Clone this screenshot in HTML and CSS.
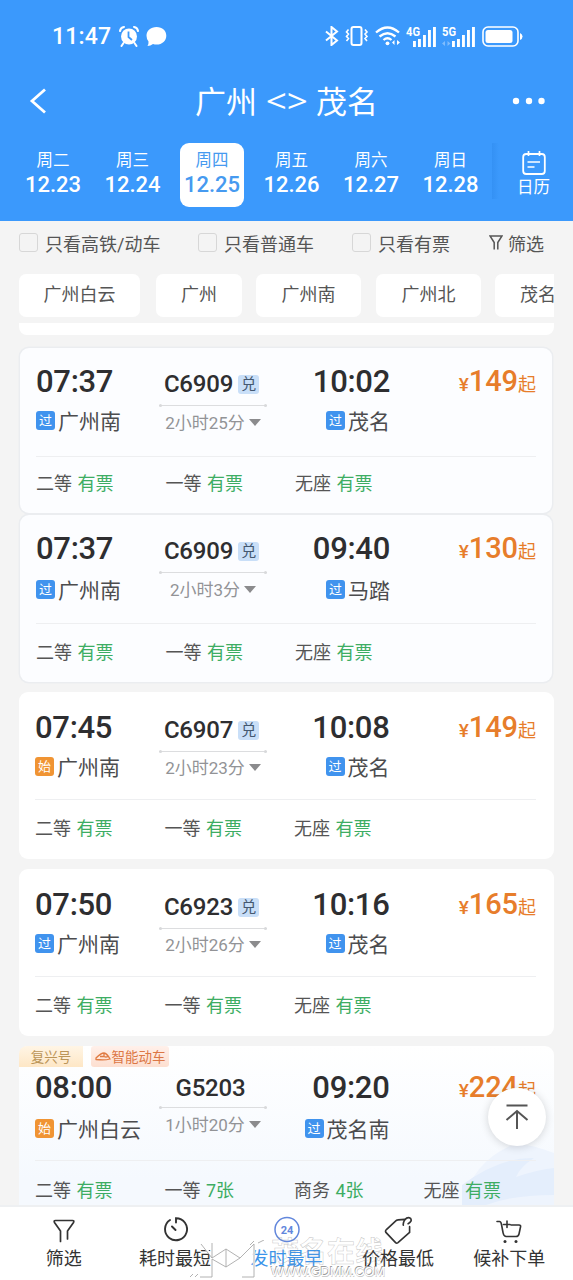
FILE: index.html
```html
<!DOCTYPE html>
<html lang="zh-CN">
<head>
<meta charset="utf-8">
<title>广州 - 茂名</title>
<link rel="stylesheet" href="styles.css">
</head>
<body>
<header class="header">
  <div class="status">
    <span class="status-time">11:47</span>
    <svg class="alarm" width="20" height="21" viewBox="0 0 20 21"><circle cx="10" cy="10.500" r="8" fill="#fff"/><path d="M1 5Q1.500 1.500 5 1M19 5Q18.500 1.500 15 1M4.500 17L2.500 20M15.500 17L17.500 20" stroke="#fff" stroke-width="2" fill="none" stroke-linecap="round"/><path d="M9.500 5.500V11L13 14" stroke="#3b99fc" stroke-width="1.800" fill="none"/></svg>
    <svg class="bubble" width="21" height="21" viewBox="0 0 21 21"><path d="M10.500 1C16.500 1 20.300 4.700 20.300 9.700S16.300 18.500 10.500 18.500Q8.800 18.500 7 18Q4.500 20 1.500 20Q2.800 18 2.500 15.500Q.5 13 .5 9.700C.5 4.700 4.700 1 10.500 1Z" fill="#fff"/></svg>
    <svg class="bt" width="14" height="20" viewBox="0 0 14 20"><path d="M1 5.500L12 14.500L6.500 19V1L12 5.500L1 14.500" fill="none" stroke="#fff" stroke-width="2"/></svg>
    <svg class="vibrate" width="24" height="20" viewBox="0 0 24 20"><rect x="6.500" y="1" width="10" height="18" rx="2" fill="none" stroke="#fff" stroke-width="2"/><path d="M3.500 3.500L1.500 6L3.500 8L1.500 10.500L3.500 12.500L1.500 15M20 3.500L22 6L20 8L22 10.500L20 12.500L22 15" fill="none" stroke="#fff" stroke-width="1.600"/></svg>
    <svg class="wifi" width="26" height="20" viewBox="0 0 26 20"><path d="M1 6.500Q12.500-3.500 24 6.500M4.500 10.500Q12.500 4 20.500 10.500M8.500 14Q12.500 10.500 16.500 14" fill="none" stroke="#fff" stroke-width="2.300"/><circle cx="12.500" cy="17.300" r="1.900" fill="#fff"/><path d="M17 16.500L19.500 14V19ZM25 16.500L22 14V19Z" fill="#fff"/></svg>
    <svg class="signal" width="31" height="21" viewBox="0 0 31 21"><text x="0" y="10" class="net" textLength="14" lengthAdjust="spacingAndGlyphs">4G</text><path d="M7 15h2.900v6H7zM12 13h2.900v8H12zM17 9h2.900v12H17zM22 4h2.900v17H22zM27 1h2.900v20H27z" fill="#fff"/></svg>
    <svg class="signal five" width="34" height="21" viewBox="0 0 34 21"><text x="0" y="10" class="net" textLength="14" lengthAdjust="spacingAndGlyphs">5G</text><path d="M10 15h2.900v6H10zM15 13h2.900v8H15zM20 9h2.900v12H20zM25 4h2.900v17H25zM30 1h2.900v20H30z" fill="#fff"/><path d="M0 17.500L3 15V20ZM8.500 17.500L5.500 15V20Z" fill="#7fbcfd"/></svg>
    <svg class="battery" width="41" height="21" viewBox="0 0 41 21"><rect x="1" y="1" width="35" height="19" rx="5" fill="none" stroke="#fff" stroke-width="1.600"/><rect x="3.500" y="4" width="27" height="13" rx="2.500" fill="#fff"/><path d="M38 7q2.500 1 2.500 3.500T38 14z" fill="#fff"/></svg>
  </div>
  <div class="titlebar">
    <svg class="back" width="18" height="26" viewBox="0 0 18 26"><path d="M17 1.500L4 13L17 24.500" fill="none" stroke="#fff" stroke-width="2.800"/></svg>
    <h1 class="title">广州 <span class="swap">&lt;&gt;</span> 茂名</h1>
    <svg class="more" width="34" height="8" viewBox="0 0 34 8"><circle cx="5" cy="4" r="3.200" fill="#fff"/><circle cx="18" cy="4" r="3.200" fill="#fff"/><circle cx="30.500" cy="4" r="3.200" fill="#fff"/></svg>
  </div>
  <nav class="dates">
    <div class="day"><span class="week">周二</span><span class="date">12.23</span></div>
    <div class="day"><span class="week">周三</span><span class="date">12.24</span></div>
    <div class="day active"><span class="week">周四</span><span class="date">12.25</span></div>
    <div class="day"><span class="week">周五</span><span class="date">12.26</span></div>
    <div class="day"><span class="week">周六</span><span class="date">12.27</span></div>
    <div class="day"><span class="week">周日</span><span class="date">12.28</span></div>
    <div class="calendar">
      <svg width="24" height="24" viewBox="0 0 24 24"><rect x="1.200" y="3" width="21.600" height="20" rx="3" fill="none" stroke="#fff" stroke-width="1.800"/><path d="M6.500 0V5M17.500 0V5M5.500 11H18M5.500 16H12.500" stroke="#fff" stroke-width="1.700"/></svg>
      <span>日历</span>
    </div>
  </nav>
</header>

<div class="filters">
  <label class="check"><i class="box"></i>只看高铁/动车</label>
  <label class="check second"><i class="box"></i>只看普通车</label>
  <label class="check third"><i class="box"></i>只看有票</label>
  <span class="more-filter"><svg width="14" height="15" viewBox="0 0 14 15"><path d="M5.200 14.500V7.500L1 1H13L8.800 7.500V14.500" fill="none" stroke="#555" stroke-width="1.500"/></svg>筛选</span>
</div>
<div class="chips">
  <span class="chip baiyun">广州白云</span>
  <span class="chip gz">广州</span>
  <span class="chip south">广州南</span>
  <span class="chip north">广州北</span>
  <span class="chip mm">茂名</span>
</div>

<main class="list">
  <div class="card-end"></div>

  <article class="card framed">
    <div class="trip">
      <div class="from"><div class="time">07:37</div><div class="station"><i class="mark">过</i>广州南</div></div>
      <div class="train"><div class="number">C6909<i class="points">兑</i></div><div class="line"></div><div class="duration">2小时25分<i class="caret"></i></div></div>
      <div class="to"><div class="time">10:02</div><div class="station"><i class="mark">过</i>茂名</div></div>
      <div class="price"><small>¥</small><b>149</b><em>起</em></div>
    </div>
    <div class="seats"><span>二等 <b>有票</b></span><span>一等 <b>有票</b></span><span>无座 <b>有票</b></span></div>
  </article>

  <article class="card framed next">
    <div class="trip">
      <div class="from"><div class="time">07:37</div><div class="station"><i class="mark">过</i>广州南</div></div>
      <div class="train"><div class="number">C6909<i class="points">兑</i></div><div class="line"></div><div class="duration">2小时3分<i class="caret"></i></div></div>
      <div class="to"><div class="time">09:40</div><div class="station"><i class="mark">过</i>马踏</div></div>
      <div class="price"><small>¥</small><b>130</b><em>起</em></div>
    </div>
    <div class="seats"><span>二等 <b>有票</b></span><span>一等 <b>有票</b></span><span>无座 <b>有票</b></span></div>
  </article>

  <article class="card">
    <div class="trip">
      <div class="from"><div class="time">07:45</div><div class="station"><i class="mark start">始</i>广州南</div></div>
      <div class="train"><div class="number">C6907<i class="points">兑</i></div><div class="line"></div><div class="duration">2小时23分<i class="caret"></i></div></div>
      <div class="to"><div class="time">10:08</div><div class="station"><i class="mark">过</i>茂名</div></div>
      <div class="price"><small>¥</small><b>149</b><em>起</em></div>
    </div>
    <div class="seats"><span>二等 <b>有票</b></span><span>一等 <b>有票</b></span><span>无座 <b>有票</b></span></div>
  </article>

  <article class="card">
    <div class="trip">
      <div class="from"><div class="time">07:50</div><div class="station"><i class="mark">过</i>广州南</div></div>
      <div class="train"><div class="number">C6923<i class="points">兑</i></div><div class="line"></div><div class="duration">2小时26分<i class="caret"></i></div></div>
      <div class="to"><div class="time">10:16</div><div class="station"><i class="mark">过</i>茂名</div></div>
      <div class="price"><small>¥</small><b>165</b><em>起</em></div>
    </div>
    <div class="seats"><span>二等 <b>有票</b></span><span>一等 <b>有票</b></span><span>无座 <b>有票</b></span></div>
  </article>

  <article class="card tagged">
    <svg class="train-art" width="92" height="62" viewBox="0 0 92 62"><path d="M0 62Q10 20 48 3Q60-2 92 10V62Z" fill="#eef4fd"/><path d="M0 42Q38 14 72 15Q58 24 54 34Q74 27 92 25V52Q50 52 24 62H0Z" fill="#e4eefc"/></svg>
    <div class="tags"><span class="tag fuxing">复兴号</span><span class="tag smart"><svg width="16" height="9" viewBox="0 0 16 9"><path d="M1 6Q6 1 9 1Q12 1.500 15 7Q10 8.500 1 7.500ZM5 4.500H9V1.500M9 4.500Q11 5.500 13 4.500" fill="none" stroke="#e07b43" stroke-width="1.300"/></svg>智能动车</span></div>
    <div class="trip">
      <div class="from"><div class="time">08:00</div><div class="station"><i class="mark start">始</i>广州白云</div></div>
      <div class="train"><div class="number plain">G5203</div><div class="line"></div><div class="duration">1小时20分<i class="caret"></i></div></div>
      <div class="to"><div class="time">09:20</div><div class="station"><i class="mark">过</i>茂名南</div></div>
      <div class="price"><small>¥</small><b>224</b><em>起</em></div>
    </div>
    <div class="seats"><span>二等 <b>有票</b></span><span>一等 <b>7张</b></span><span>商务 <b>4张</b></span><span>无座 <b>有票</b></span></div>
  </article>

  <button class="to-top"><svg width="24" height="26" viewBox="0 0 24 26"><path d="M1.500 1.500H22.500M12 25V7M1.500 16L12 7L22.500 16" fill="none" stroke="#555" stroke-width="2"/></svg></button>
</main>

<footer class="tabs">
  <div class="tab"><svg width="26" height="28" viewBox="0 0 26 28"><path d="M9.500 25V14.500L3.500 6Q2.500 4 4.500 4H21.500Q23.500 4 22.500 6L16.500 14.500V22.500" fill="none" stroke="#333" stroke-width="1.700" stroke-linecap="round"/></svg>筛选</div>
  <div class="tab"><svg width="26" height="28" viewBox="0 0 26 28"><path d="M8 3.500A11 11 0 1 0 14 1.700V6M10 10L13.500 13.500" fill="none" stroke="#333" stroke-width="1.900" stroke-linecap="round"/></svg>耗时最短</div>
  <div class="tab current"><svg width="26" height="28" viewBox="0 0 26 28"><circle cx="13" cy="13" r="12" fill="none" stroke="#6287dc" stroke-width="1.500"/><text x="13" y="17" text-anchor="middle" class="clock-text">24</text></svg>发时最早</div>
  <div class="tab"><svg width="30" height="30" viewBox="0 0 30 30"><path d="M15 4L22 3.500M27 11V17L15 27.500Q13.500 28.500 12.500 27.500L2.500 17Q1.500 15.500 3 14L13 4.800Q14 4 15 4M20.500 9.500Q20 7 22 4Q25 .5 28 2.500Q30 5.500 25.500 8" fill="none" stroke="#333" stroke-width="1.700" stroke-linecap="round"/></svg>价格最低</div>
  <div class="tab"><svg width="28" height="28" viewBox="0 0 28 28"><path d="M2 5H4.500Q6 5 6.500 8L8 16Q8.500 19.500 11 20H22M16 8.500H24Q26 8.500 25.500 10.500L24 17.500Q23.500 20 21 20M12 4.500V11M8.500 8H15" fill="none" stroke="#333" stroke-width="1.600" stroke-linecap="round"/><circle cx="10" cy="25" r="1.500" fill="#333"/><circle cx="21" cy="25" r="1.500" fill="#333"/></svg>候补下单</div>
  <div class="watermark">
    <svg width="80" height="40" viewBox="0 0 80 40"><g fill="none" stroke="#fff" stroke-width="2.500"><path d="M14 5L34 26L50 16M24 2V38H10M40 8V28M36 14L50 22L66 4M66 4V38H54"/></g><g fill="none" stroke="#a9a9a9" stroke-width=".9"><path d="M13 4L24 18V3M24 18L38 9V27L24 19V37H12M38 9L52 18L38 27M52 18L66 4V37H54M2 37L5 34M7 37L10 34M62 5L66 1M70 3L76 0"/></g></svg>
    <div class="mark-text"><span class="mark-name">茂名在线</span><span class="mark-url">WWW.GDMM.COM</span></div>
  </div>
</footer>
</body>
</html>
```
FILE: styles.css
```css
* { box-sizing: border-box; }
body {
  margin: 0;
  width: 573px;
  height: 1280px;
  overflow: hidden;
  display: flex;
  flex-direction: column;
  background: #f4f4f4;
  color: #4c4c4e;
  font-family: Roboto, "Noto Sans CJK SC", sans-serif;
  font-size: 18px;
}
i, em { font-style: normal; }
svg { display: block; flex: none; }

/* header */
.header { flex: none; height: 221px; background: #3b99fc; color: #fff; }
.status { height: 72px; padding-left: 52px; display: flex; align-items: center; }
.status-time { width: 59px; font-size: 23px; font-weight: 500; letter-spacing: .2px; }
.alarm { margin-left: 8px; }
.bubble { margin-left: 7px; }
.bt { margin-left: 158px; }
.vibrate { margin-left: 6px; }
.wifi { margin-left: 6px; }
.signal { margin-left: 5px; }
.five { margin-left: 5px; }
.net { font: bold 12px Roboto, sans-serif; fill: #fff; }
.battery { margin-left: 6px; }
.titlebar { height: 58px; padding: 0 28px; display: flex; align-items: center; justify-content: space-between; }
.title { margin: 0 0 0 16px; padding-top: 3px; font-size: 31px; font-weight: 400; line-height: 58px; white-space: pre; }
.swap { display: inline-block; font-family: "Open Sans", sans-serif; font-size: 33px; line-height: 30px; transform: scaleX(1.12); margin: 0 3px; }
.dates { height: 77px; padding: 13px 0 0 21px; display: flex; gap: 15.500px; }
.day { width: 64px; height: 64px; border-radius: 9px; display: flex; flex-direction: column; align-items: center; }
.week { margin-top: 6px; font-size: 16.500px; line-height: 24px; }
.date { font-size: 22px; line-height: 24px; font-weight: 500; }
.active { background: #fff; color: #469af0; }
.calendar { margin-left: -6px; padding: 8px 0 0 5px; width: 78px; height: 56px; display: flex; flex-direction: column; align-items: center; font-size: 16.500px; line-height: 26px; background: linear-gradient(90deg, #3491f4, #3b99fc 7px); }

/* filters */
.filters { flex: none; height: 46px; padding: 0 0 3px 19px; display: flex; align-items: center; color: #555; }
.check { display: flex; align-items: center; width: 179px; gap: 7px; }
.box { width: 19px; height: 19px; border: 1.500px solid #d7d7d7; border-radius: 3px; }
.second { width: 154px; }
.third { width: 137px; }
.more-filter { display: flex; align-items: center; gap: 5px; }
.chips { flex: none; width: 554px; height: 56px; padding: 7px 0 6px 19px; overflow: hidden; display: flex; }
.chip { flex: none; height: 43px; border-radius: 7px; background: #fff; color: #555; text-align: center; line-height: 41px; }
.baiyun { width: 121px; margin-right: 16px; }
.gz { width: 86px; margin-right: 14px; }
.south { width: 105px; margin-right: 15px; }
.north { width: 105px; margin-right: 14px; }
.mm { width: 86px; }

/* train list */
.list { position: relative; flex: none; height: 882px; overflow: hidden; padding: 0 19px; }
.card-end { height: 12px; background: #fff; border-radius: 0 0 8px 8px; margin-bottom: 13px; }
.card {
  --top: 20px; --station: 9px; --number: 3px; --line: 6px; --duration: 3px; --trip: 108px; --seats: 14px;
  position: relative; height: 167px; margin-bottom: 10px; padding: 0 18px 0 16px; border-radius: 9px; background: #fff;
}
.framed {
  --top: 18px; --station: 9px; --duration: 4px; --trip: 109px; --seats: 12px;
  height: 165px; margin: 0 2px 2px 1px; padding: 0 16px; background: #fcfdff; box-shadow: 0 0 0 1.500px #ebedf0;
}
.next { --station: 11px; --seats: 14px; height: 167px; margin-bottom: 10px; }
.trip { height: var(--trip); padding-top: var(--top); border-bottom: 1px solid #eeeff1; display: grid; grid-template-columns: 124px 108px 122.500px 1fr; }
.framed .trip { grid-template-columns: 123px 108px 123px 1fr; }
.time { padding-top: 1px; height: 30px; font-size: 31px; line-height: 30px; font-weight: 500; letter-spacing: -.3px; color: #2e2e30; white-space: nowrap; }
.station { margin-top: var(--station); height: 30px; display: flex; align-items: center; gap: 3px; font-size: 21px; white-space: nowrap; }
.mark { width: 19px; height: 19px; border-radius: 3px; background: #4093ee; color: #fff; font-size: 13px; line-height: 19px; text-align: center; }
.start { background: #f09433; }
.train { display: flex; flex-direction: column; align-items: center; padding-top: var(--number); }
.number { height: 30px; margin-right: 3px; display: flex; align-items: center; gap: 5px; font-size: 24px; font-weight: 500; letter-spacing: -.2px; color: #2e2e30; }
.plain { margin-right: 5px; }
.points { width: 21px; height: 19px; border-radius: 3px; background: #c9dff8; color: #445870; font-size: 15px; font-weight: 400; line-height: 19px; text-align: center; }
.line { width: 108px; height: 1px; margin-top: var(--line); background: #dcdddf; }
.line::before, .line::after { content: ""; float: left; width: 3px; height: 3px; margin-top: -1px; border-radius: 50%; background: #d8d9db; }
.line::after { float: right; }
.duration { margin-top: var(--duration); height: 22px; display: flex; align-items: center; gap: 4px; font-size: 17px; color: #929396; white-space: nowrap; }
.caret { margin-top: 2px; border: 6px solid transparent; border-top: 7px solid #8b8b8d; border-bottom: 0; }
.to { display: flex; flex-direction: column; align-items: flex-end; }
.price { display: flex; justify-content: flex-end; align-items: baseline; height: 30px; line-height: 30px; color: #e77d2b; }
.price small { font-size: 19px; font-weight: 500; }
.price b { font-size: 29px; font-weight: 500; letter-spacing: -.1px; }
.price em { font-size: 18px; }
.seats { margin-top: var(--seats); display: grid; grid-template-columns: repeat(4, 129.500px); line-height: 30px; color: #555; white-space: nowrap; }
.seats b { font-weight: 400; color: #3dad63; margin-left: 1px; }
.tagged { --top: 5px; --station: 11px; --number: 1px; --line: 4px; --duration: 4px; --trip: 94px; --seats: 15px; background: linear-gradient(#fff, #f5f9fe 80%); }
.tags { position: relative; height: 21px; margin-left: -16px; display: flex; gap: 8px; }
.tag { height: 21px; line-height: 20px; font-size: 13.500px; display: flex; align-items: center; justify-content: center; }
.fuxing { width: 64px; border-radius: 8px 0 0 0; background: linear-gradient(#fff5e5, #fee7c6); color: #bb9558; }
.smart { width: 78px; gap: 1px; border-radius: 3px; background: linear-gradient(#fff0ea, #fddfd0); color: #dc7745; }
.train-art { position: absolute; right: 0; top: 97px; }
.tagged .trip, .tagged .seats { position: relative; }
.to-top { position: absolute; left: 488px; top: 765px; width: 58px; height: 58px; padding: 0; border: 0; border-radius: 50%; background: #fff; box-shadow: 0 1px 8px rgba(0, 0, 0, .16); display: flex; align-items: center; justify-content: center; }

/* bottom bar */
.tabs { position: relative; flex: 1; padding: 9px 8px 0; display: flex; background: #fff; border-top: 2px solid #eef0f2; color: #333; }
.tab { width: 111.500px; display: flex; flex-direction: column; align-items: center; line-height: 28px; }
.tab svg { height: 29px; }
.current { color: #3c94ea; }
.clock-text { font: bold 11px Roboto, sans-serif; fill: #6287dc; }
.watermark { position: absolute; left: 188px; top: 33px; display: flex; gap: 3px; }
.mark-text { display: flex; flex-direction: column; white-space: nowrap; }
.mark-name { font-size: 28px; line-height: 25px; font-weight: 700; color: transparent; -webkit-text-stroke: .5px rgba(150, 150, 150, .55); }
.mark-url { font-family: "Liberation Sans", sans-serif; font-size: 13.300px; letter-spacing: -.3px; line-height: 13px; color: #fff; text-shadow: -.7px -.7px 0 #999, .5px .5px 0 #ccc; }
```
